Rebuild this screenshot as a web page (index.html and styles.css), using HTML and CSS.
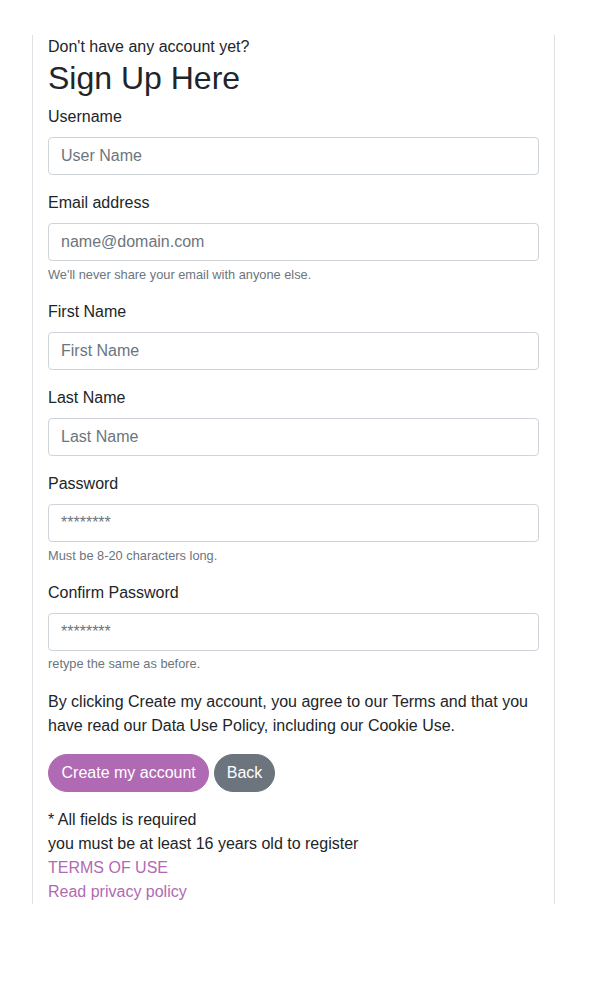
FILE: index.html
```html
<!DOCTYPE html>
<html lang="en">
<head>
<meta charset="utf-8">
<title>Sign Up</title>
<link rel="stylesheet" href="styles.css">
</head>
<body>
<div class="page">
  <div class="card">
    <div class="intro">Don't have any account yet?</div>
    <h2 class="title">Sign Up Here</h2>
    <form class="form">
      <div class="group">
        <label class="label" for="u">Username</label>
        <input class="control" id="u" type="text" placeholder="User Name">
      </div>
      <div class="group">
        <label class="label" for="e">Email address</label>
        <input class="control" id="e" type="email" placeholder="name@domain.com">
        <small class="help">We'll never share your email with anyone else.</small>
      </div>
      <div class="group">
        <label class="label" for="f">First Name</label>
        <input class="control" id="f" type="text" placeholder="First Name">
      </div>
      <div class="group">
        <label class="label" for="l">Last Name</label>
        <input class="control" id="l" type="text" placeholder="Last Name">
      </div>
      <div class="group">
        <label class="label" for="p">Password</label>
        <input class="control" id="p" type="password" placeholder="********">
        <small class="help">Must be 8-20 characters long.</small>
      </div>
      <div class="group">
        <label class="label" for="c">Confirm Password</label>
        <input class="control" id="c" type="password" placeholder="********">
        <small class="help">retype the same as before.</small>
      </div>
      <p class="terms">By clicking Create my account, you agree to our Terms and that you have read our Data Use Policy, including our Cookie Use.</p>
      <div class="actions">
        <button type="button" class="btn btn-primary">Create my account</button>
        <button type="button" class="btn btn-secondary">Back</button>
      </div>
    </form>
    <div class="notes">
      <div>* All fields is required</div>
      <div>you must be at least 16 years old to register</div>
      <a class="link" href="#">TERMS OF USE</a>
      <a class="link" href="#">Read privacy policy</a>
    </div>
  </div>
</div>
</body>
</html>
```
FILE: styles.css
```css
* { box-sizing: border-box; }
html, body { margin: 0; padding: 0; }
body {
  font-family: "Liberation Sans", Arial, sans-serif;
  font-size: 16px;
  line-height: 1.5;
  color: #212529;
  background: #fff;
}
.page {
  padding-top: 35px;
  padding-left: 32px;
}
.card {
  width: 523px;
  border-left: 1px solid #dee2e6;
  border-right: 1px solid #dee2e6;
  padding: 0 15px;
}
.title {
  font-size: 32px;
  font-weight: 500;
  line-height: 1.2;
  margin: 0 0 8px;
}
.form { margin: 0; }
.group { margin-bottom: 16px; }
.label {
  display: inline-block;
  margin-bottom: 8px;
}
.control {
  display: block;
  width: 100%;
  height: 38px;
  padding: 6px 12px;
  font-family: inherit;
  font-size: 16px;
  line-height: 1.5;
  color: #495057;
  background: #fff;
  border: 1px solid #ced4da;
  border-radius: 4px;
}
.control::placeholder { color: #6c757d; opacity: 1; }
.help {
  display: block;
  margin-top: 4.3px;
  font-size: 12.8px;
  line-height: 1.45;
  color: #6c757d;
}
.terms { margin: 0 0 16px; }
.actions { margin-bottom: 16px; height: 38px; }
.btn {
  display: inline-block;
  vertical-align: top;
  font-family: inherit;
  font-size: 16px;
  line-height: 1.5;
  padding: 6px 12px;
  border: 1px solid transparent;
  border-radius: 19px;
  color: #fff;
  cursor: pointer;
}
.btn-primary { background: #b06ab3; border-color: #b06ab3; padding: 6px 12.5px; }
.btn-secondary { background: #6c757d; border-color: #6c757d; }
.notes { display: flex; flex-direction: column; }
.link { color: #b06ab3; text-decoration: none; align-self: flex-start; }
```
